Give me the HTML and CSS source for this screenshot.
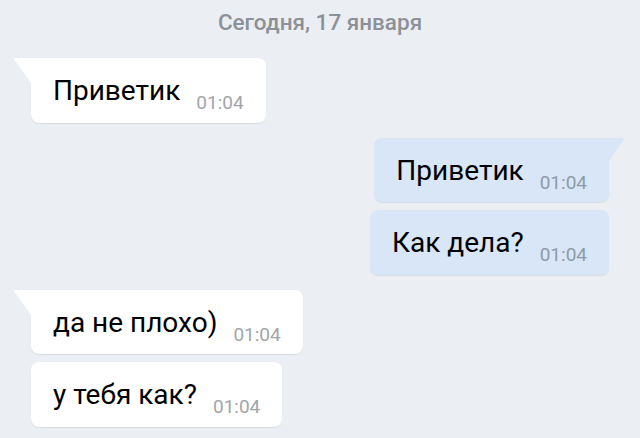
FILE: index.html
```html
<!DOCTYPE html>
<html lang="ru">
<head>
  <meta charset="UTF-8" />
  <title>Чат</title>
  <link rel="stylesheet" href="styles.css">
</head>
<body>

  <!-- Chat -->
  <div class="chat">
    <div class="date">Сегодня, 17 января</div>

    <div class="msg in first">
      <svg class="tail" width="19" height="26" viewBox="0 0 19 26"><path d="M19 0 H2.5 Q0 0 1.6 2 L16 22 Q18 25 19 26 Z" /></svg>
      <span class="text">Приветик</span><span class="time">01:04</span>
    </div>

    <div class="msg out first">
      <svg class="tail" width="17" height="26" viewBox="0 0 17 26"><path d="M0 0 H14.5 Q17 0 15.6 2 L3 20 Q1 23 0 26 Z" /></svg>
      <span class="text">Приветик</span><span class="time">01:04</span>
    </div>
    <div class="msg out">
      <span class="text">Как дела?</span><span class="time">01:04</span>
    </div>

    <div class="msg in first">
      <svg class="tail" width="19" height="26" viewBox="0 0 19 26"><path d="M19 0 H2.5 Q0 0 1.6 2 L16 22 Q18 25 19 26 Z" /></svg>
      <span class="text">да не плохо)</span><span class="time">01:04</span>
    </div>
    <div class="msg in">
      <span class="text">у тебя как?</span><span class="time">01:04</span>
    </div>
  </div>

</body>
</html>
```

FILE: styles.css
```css
body {
  margin: 0;
  background: #ebeef3;
  font-family: Roboto, "Liberation Sans", sans-serif;
}
.chat {
  display: flex;
  flex-direction: column;
  padding: 9px 31px 0;
}
.date {
  text-align: center;
  font-size: 22.5px;
  line-height: 26px;
  font-weight: 500;
  color: #8c9197;
  margin-bottom: 16px;
}
.msg {
  position: relative;
  box-sizing: border-box;
  height: 64.5px;
  padding: 17px 22px 0;
  line-height: 32px;
  border-radius: 8px;
  box-shadow: 0 1px 1px rgba(0, 0, 0, 0.08);
  margin-bottom: 8px;
  white-space: nowrap;
}
.msg.in {
  align-self: flex-start;
  background: #fff;
}
.msg.out {
  align-self: flex-end;
  background: #d9e6f7;
}
.msg.first {
  margin-top: 7px;
}
.msg.in.first {
  border-top-left-radius: 0;
}
.msg.out.first {
  border-top-right-radius: 0;
}
.text {
  font-size: 28px;
  color: #000;
}
.time {
  font-size: 19px;
  line-height: 19px;
  color: #a1a5a9;
  margin-left: 16px;
  vertical-align: -9px;
}
.out .time {
  color: #8e9aa8;
}
.tail {
  position: absolute;
  top: 0;
}
.in .tail {
  left: -18px;
  fill: #fff;
}
.out .tail {
  right: -16px;
  fill: #d9e6f7;
}
```
